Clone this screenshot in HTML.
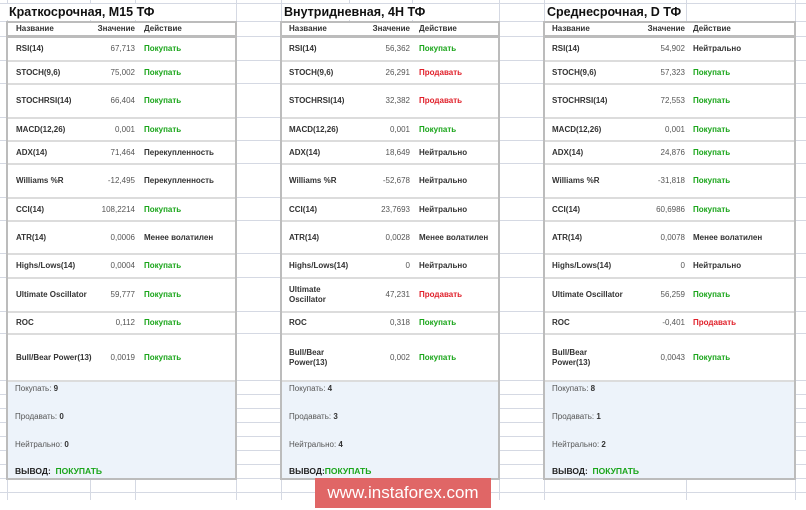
<!DOCTYPE html>
<html><head><meta charset="utf-8"><style>
*{margin:0;padding:0;box-sizing:border-box}
body{width:806px;height:510px;background:#fff;position:relative;overflow:hidden;font-family:"Liberation Sans",Arial,sans-serif}
.h{position:absolute;left:0;width:806px;height:1px;background:#d5d9e3}
.v{position:absolute;top:0;height:500px;width:1px;background:#d5d9e3}
.title{position:absolute;top:4px;font-size:12.5px;font-weight:bold;color:#111;background:#fff;padding:0 2px;line-height:16px}
.p{position:absolute;top:21px;border:2px solid #bcbcbc;background:#fff}
.r{position:relative;border-bottom:2px solid #dcdcdc;font-size:8px;font-weight:bold;color:#333}
.r span{position:absolute;top:50%;transform:translateY(-50%);line-height:10px}
.hd{border-bottom:3px solid #bcbcbc;height:15px}
.val{text-align:right;font-weight:normal;color:#555}
.g{color:#1aa51a}.rd{color:#e0202a}
.sum{background:#edf3fa;position:relative;height:96px;font-size:8px;color:#555}
.sum div{position:absolute;left:7px}
.sum b{color:#333}
.wm{position:absolute;left:315px;top:478px;width:176px;height:30px;background:#e06666;color:#fff;font-size:17px;text-align:center;line-height:30px}
</style></head><body>
<div class="h" style="top:3px"></div><div class="h" style="top:21px"></div><div class="h" style="top:36px"></div><div class="h" style="top:60px"></div><div class="h" style="top:83px"></div><div class="h" style="top:117px"></div><div class="h" style="top:140px"></div><div class="h" style="top:163px"></div><div class="h" style="top:197px"></div><div class="h" style="top:220px"></div><div class="h" style="top:253px"></div><div class="h" style="top:277px"></div><div class="h" style="top:311px"></div><div class="h" style="top:333px"></div><div class="h" style="top:380px"></div><div class="h" style="top:394px"></div><div class="h" style="top:408px"></div><div class="h" style="top:422px"></div><div class="h" style="top:436px"></div><div class="h" style="top:450px"></div><div class="h" style="top:464px"></div><div class="h" style="top:478px"></div><div class="h" style="top:492px"></div>
<div class="v" style="left:7px"></div><div class="v" style="left:90px"></div><div class="v" style="left:135px"></div><div class="v" style="left:236px"></div><div class="v" style="left:281px"></div><div class="v" style="left:349px"></div><div class="v" style="left:412px"></div><div class="v" style="left:499px"></div><div class="v" style="left:544px"></div><div class="v" style="left:686px"></div><div class="v" style="left:795px"></div>

<div class="title" style="left:7px">Краткосрочная, M15 ТФ</div>
<div class="title" style="left:282px">Внутридневная, 4H ТФ</div>
<div class="title" style="left:545px">Среднесрочная, D ТФ</div>

<!-- Panel 1 -->
<div class="p" style="left:6px;width:231px">
<div class="r hd"><span style="left:8px">Название</span><span class="val" style="right:100px;font-weight:bold;color:#333">Значение</span><span style="left:136px">Действие</span></div>
<div class="r" style="height:24px"><span style="left:8px">RSI(14)</span><span class="val" style="right:100px">67,713</span><span class="g" style="left:136px">Покупать</span></div>
<div class="r" style="height:23px"><span style="left:8px">STOCH(9,6)</span><span class="val" style="right:100px">75,002</span><span class="g" style="left:136px">Покупать</span></div>
<div class="r" style="height:34px"><span style="left:8px">STOCHRSI(14)</span><span class="val" style="right:100px">66,404</span><span class="g" style="left:136px">Покупать</span></div>
<div class="r" style="height:23px"><span style="left:8px">MACD(12,26)</span><span class="val" style="right:100px">0,001</span><span class="g" style="left:136px">Покупать</span></div>
<div class="r" style="height:23px"><span style="left:8px">ADX(14)</span><span class="val" style="right:100px">71,464</span><span style="left:136px">Перекупленность</span></div>
<div class="r" style="height:34px"><span style="left:8px">Williams %R</span><span class="val" style="right:100px">-12,495</span><span style="left:136px">Перекупленность</span></div>
<div class="r" style="height:23px"><span style="left:8px">CCI(14)</span><span class="val" style="right:100px">108,2214</span><span class="g" style="left:136px">Покупать</span></div>
<div class="r" style="height:33px"><span style="left:8px">ATR(14)</span><span class="val" style="right:100px">0,0006</span><span style="left:136px">Менее волатилен</span></div>
<div class="r" style="height:24px"><span style="left:8px">Highs/Lows(14)</span><span class="val" style="right:100px">0,0004</span><span class="g" style="left:136px">Покупать</span></div>
<div class="r" style="height:34px"><span style="left:8px">Ultimate Oscillator</span><span class="val" style="right:100px">59,777</span><span class="g" style="left:136px">Покупать</span></div>
<div class="r" style="height:22px"><span style="left:8px">ROC</span><span class="val" style="right:100px">0,112</span><span class="g" style="left:136px">Покупать</span></div>
<div class="r" style="height:47px"><span style="left:8px">Bull/Bear Power(13)</span><span class="val" style="right:100px">0,0019</span><span class="g" style="left:136px">Покупать</span></div>
<div class="sum"><div style="top:2px">Покупать: <b>9</b></div><div style="top:30px">Продавать: <b>0</b></div><div style="top:58px">Нейтрально: <b>0</b></div><div style="top:84px;font-size:8.5px;font-weight:bold;color:#222">ВЫВОД:&nbsp; <span class="g">ПОКУПАТЬ</span></div></div>
</div>

<!-- Panel 2 -->
<div class="p" style="left:280px;width:220px">
<div class="r hd"><span style="left:7px">Название</span><span class="val" style="right:88px;font-weight:bold;color:#333">Значение</span><span style="left:137px">Действие</span></div>
<div class="r" style="height:24px"><span style="left:7px">RSI(14)</span><span class="val" style="right:88px">56,362</span><span class="g" style="left:137px">Покупать</span></div>
<div class="r" style="height:23px"><span style="left:7px">STOCH(9,6)</span><span class="val" style="right:88px">26,291</span><span class="rd" style="left:137px">Продавать</span></div>
<div class="r" style="height:34px"><span style="left:7px">STOCHRSI(14)</span><span class="val" style="right:88px">32,382</span><span class="rd" style="left:137px">Продавать</span></div>
<div class="r" style="height:23px"><span style="left:7px">MACD(12,26)</span><span class="val" style="right:88px">0,001</span><span class="g" style="left:137px">Покупать</span></div>
<div class="r" style="height:23px"><span style="left:7px">ADX(14)</span><span class="val" style="right:88px">18,649</span><span style="left:137px">Нейтрально</span></div>
<div class="r" style="height:34px"><span style="left:7px">Williams %R</span><span class="val" style="right:88px">-52,678</span><span style="left:137px">Нейтрально</span></div>
<div class="r" style="height:23px"><span style="left:7px">CCI(14)</span><span class="val" style="right:88px">23,7693</span><span style="left:137px">Нейтрально</span></div>
<div class="r" style="height:33px"><span style="left:7px">ATR(14)</span><span class="val" style="right:88px">0,0028</span><span style="left:137px">Менее волатилен</span></div>
<div class="r" style="height:24px"><span style="left:7px">Highs/Lows(14)</span><span class="val" style="right:88px">0</span><span style="left:137px">Нейтрально</span></div>
<div class="r" style="height:34px"><span style="left:7px">Ultimate<br>Oscillator</span><span class="val" style="right:88px">47,231</span><span class="rd" style="left:137px">Продавать</span></div>
<div class="r" style="height:22px"><span style="left:7px">ROC</span><span class="val" style="right:88px">0,318</span><span class="g" style="left:137px">Покупать</span></div>
<div class="r" style="height:47px"><span style="left:7px">Bull/Bear<br>Power(13)</span><span class="val" style="right:88px">0,002</span><span class="g" style="left:137px">Покупать</span></div>
<div class="sum"><div style="top:2px">Покупать: <b>4</b></div><div style="top:30px">Продавать: <b>3</b></div><div style="top:58px">Нейтрально: <b>4</b></div><div style="top:84px;font-size:8.5px;font-weight:bold;color:#222">ВЫВОД:<span class="g">ПОКУПАТЬ</span></div></div>
</div>

<!-- Panel 3 -->
<div class="p" style="left:543px;width:253px">
<div class="r hd"><span style="left:7px">Название</span><span class="val" style="right:109px;font-weight:bold;color:#333">Значение</span><span style="left:148px">Действие</span></div>
<div class="r" style="height:24px"><span style="left:7px">RSI(14)</span><span class="val" style="right:109px">54,902</span><span style="left:148px">Нейтрально</span></div>
<div class="r" style="height:23px"><span style="left:7px">STOCH(9,6)</span><span class="val" style="right:109px">57,323</span><span class="g" style="left:148px">Покупать</span></div>
<div class="r" style="height:34px"><span style="left:7px">STOCHRSI(14)</span><span class="val" style="right:109px">72,553</span><span class="g" style="left:148px">Покупать</span></div>
<div class="r" style="height:23px"><span style="left:7px">MACD(12,26)</span><span class="val" style="right:109px">0,001</span><span class="g" style="left:148px">Покупать</span></div>
<div class="r" style="height:23px"><span style="left:7px">ADX(14)</span><span class="val" style="right:109px">24,876</span><span class="g" style="left:148px">Покупать</span></div>
<div class="r" style="height:34px"><span style="left:7px">Williams %R</span><span class="val" style="right:109px">-31,818</span><span class="g" style="left:148px">Покупать</span></div>
<div class="r" style="height:23px"><span style="left:7px">CCI(14)</span><span class="val" style="right:109px">60,6986</span><span class="g" style="left:148px">Покупать</span></div>
<div class="r" style="height:33px"><span style="left:7px">ATR(14)</span><span class="val" style="right:109px">0,0078</span><span style="left:148px">Менее волатилен</span></div>
<div class="r" style="height:24px"><span style="left:7px">Highs/Lows(14)</span><span class="val" style="right:109px">0</span><span style="left:148px">Нейтрально</span></div>
<div class="r" style="height:34px"><span style="left:7px">Ultimate Oscillator</span><span class="val" style="right:109px">56,259</span><span class="g" style="left:148px">Покупать</span></div>
<div class="r" style="height:22px"><span style="left:7px">ROC</span><span class="val" style="right:109px">-0,401</span><span class="rd" style="left:148px">Продавать</span></div>
<div class="r" style="height:47px"><span style="left:7px">Bull/Bear<br>Power(13)</span><span class="val" style="right:109px">0,0043</span><span class="g" style="left:148px">Покупать</span></div>
<div class="sum"><div style="top:2px">Покупать: <b>8</b></div><div style="top:30px">Продавать: <b>1</b></div><div style="top:58px">Нейтрально: <b>2</b></div><div style="top:84px;font-size:8.5px;font-weight:bold;color:#222">ВЫВОД:&nbsp; <span class="g">ПОКУПАТЬ</span></div></div>
</div>

<div class="wm">www.instaforex.com</div>
</body></html>
